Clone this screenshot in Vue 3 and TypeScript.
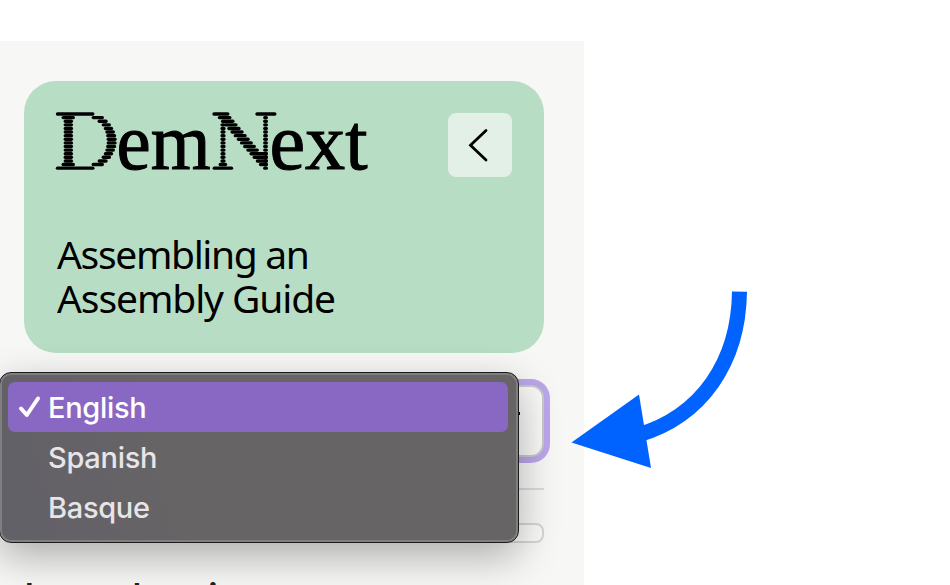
<script setup lang="ts">
import { ref } from 'vue'

interface Bar { y: number; from: number; to: number }

const languages = ['English', 'Spanish', 'Basque']
const selected = ref('English')

const rowY = (row: number): number => 4 + row * 3.61

// Horizontal spans of the striped initials, one entry per row: [from, to].
const bowl: [number, number][] = [
  [35.8, 47.8], [41.8, 51.5], [45.8, 54.8], [48, 57], [49.5, 58.8], [50.3, 60], [50.8, 60.5],
  [50.8, 60.5], [50.3, 60], [49.5, 58.8], [48, 57], [45.8, 54.8], [41.8, 51.5], [35.8, 47.8],
]

const barsD: Bar[] = [
  { y: rowY(0), from: 0, to: 38.3 },
  { y: rowY(15), from: 0, to: 38.3 },
  ...bowl.map(([from, to], i) => ({ y: rowY(i + 1), from, to })),
  ...bowl.map((_, i) => {
    const wide = i === 0 || i === 13
    return { y: rowY(i + 1), from: wide ? 5.7 : 7.8, to: wide ? 18.8 : 16.9 }
  }),
]

const diagonal = Array.from({ length: 14 }, (_, i): Bar => ({
  y: rowY(i + 1),
  from: 162 + i * 3.16,
  to: Math.min(i > 9 ? 211.8 : 175.3 + i * 3.05, 211.8),
}))

const barsN: Bar[] = [
  { y: rowY(0), from: 156.5, to: 173.3 },
  { y: rowY(0), from: 199.5, to: 220.3 },
  { y: rowY(15), from: 156.8, to: 177 },
  ...diagonal,
  ...Array.from({ length: 12 }, (_, i): Bar => ({
    y: rowY(i + 3),
    from: i === 11 ? 162.8 : 164.6,
    to: i === 11 ? 171 : 169.4,
  })),
  ...Array.from({ length: 15 }, (_, i): Bar => ({ y: rowY(i + 1), from: 207.3, to: 211.8 })),
]
const bars: Bar[] = [...barsD, ...barsN]
</script>

<template>
  <main class="page">
    <aside class="sidebar">
      <header class="card">
        <div class="brand">
          <svg class="logo" width="316" height="64" viewBox="0 0 316 64" role="img" aria-label="DemNext">
            <line v-for="(b, i) in bars" :key="i" :x1="b.from + 1.5" :x2="b.to - 1.5" :y1="b.y" :y2="b.y" />
            <text x="60.5" y="59" textLength="94" lengthAdjust="spacingAndGlyphs">em</text>
            <text x="213.5" y="59" textLength="98" lengthAdjust="spacingAndGlyphs">ext</text>
          </svg>
          <button class="collapse" type="button" aria-label="Collapse">
            <svg width="64" height="64" viewBox="0 0 64 64"><path d="M38 17.5 L22.5 32.2 L38 47" /></svg>
          </button>
        </div>
        <h1>Assembling an<br><span>Assembly Guide</span></h1>
      </header>
      <div class="select"><span class="caret"></span></div>
      <hr>
      <div class="search"></div>
      <h2>Introduction</h2>
      <ul class="menu">
        <li v-for="lang in languages" :key="lang" :class="{ active: lang === selected }" @click="selected = lang">
          <svg v-if="lang === selected" class="check" width="24" height="24" viewBox="0 0 24 24"><path d="M3 13.5 L8.8 20 L20 3.5" /></svg>
          <span>{{ lang }}</span>
        </li>
      </ul>
    </aside>
    <svg class="arrow" width="180" height="180" viewBox="0 0 180 180">
      <path class="shaft" d="M169.5 1.7 C168.5 72 132 126 68 145" />
      <path class="head" d="M1.5 152.5 L69 104.5 L81 178 Z" />
    </svg>
  </main>
</template>

<style>
body { background: #fff; overflow: hidden; }
</style>

<style scoped>
* { box-sizing: border-box; }
.page { position: relative; width: 950px; height: 585px; padding-top: 41px; overflow: hidden; }
.sidebar { position: relative; width: 584px; height: 544px; padding: 40px 40px 0 24px; background: #f7f7f5; overflow: hidden; }
.card { height: 272px; padding: 32px; border-radius: 32px; background: #b8ddc5; }
.brand { display: flex; justify-content: space-between; height: 64px; }
.logo { margin-top: -3.5px; overflow: visible; }
.logo line { stroke: #000; stroke-width: 3.4; stroke-linecap: round; }
.logo text { font: 81px "Liberation Serif", serif; fill: #000; stroke: #000; stroke-width: 1.1; }
.collapse { width: 64px; height: 64px; padding: 0; border: 0; border-radius: 8px; background: #e2f0e7; }
.collapse svg { display: block; }
.collapse path { fill: none; stroke: #000; stroke-width: 2.8; stroke-linecap: round; }
h1 { margin: 55px 0 0 1px; font: 400 39px/44px "Noto Sans", sans-serif; letter-spacing: -1.35px; color: #000; white-space: nowrap; }
h1 span { letter-spacing: -1.1px; }
.select { display: flex; align-items: center; justify-content: flex-end; height: 72px; margin-top: 32px; border: 2px solid #c9c9ca; border-radius: 13px; background: #f9f9f8; box-shadow: 0 0 0 6px #baa7eb; }
.caret { width: 3px; height: 3px; margin: -15px 22px 0 0; background: #111; }
hr { height: 2px; margin: 31px 0 0; border: 0; background: #dadad9; }
.search { height: 20px; margin-top: 33px; border: 2px solid #d5d5d4; border-radius: 8px; background: #fafaf9; }
h2 { margin: 35px 0 0; font: 500 39px/40px Inter, sans-serif; letter-spacing: 1.7px; color: #222; }
.menu { position: absolute; left: -1px; top: 330.5px; width: 520px; height: 171.5px; margin: 0; padding: 9.5px 10px 9px 8px; list-style: none; border: 1px solid #1c1c1c; border-radius: 12px; background: linear-gradient(75deg, #626068, #676466 35%, #676466); box-shadow: inset 0 0 0 2px #807e7e, 0 14px 40px rgb(0 0 0 / 30%); }
li { display: flex; align-items: center; height: 50px; padding-left: 40px; border-radius: 7px; font: 450 29px/50px Inter, sans-serif; letter-spacing: -0.3px; color: #e7e5e8; }
li span { padding-top: 1px; }
li.active { color: #fff; background: #8968c4; }
.check { width: 24px; margin: 0 6px 0 -30px; }
.check path { fill: none; stroke: #fff; stroke-width: 4; stroke-linecap: round; stroke-linejoin: round; }
.arrow { position: absolute; left: 570px; top: 290px; }
.shaft { fill: none; stroke: #0062ff; stroke-width: 15; }
.head { fill: #0062ff; }
</style>
